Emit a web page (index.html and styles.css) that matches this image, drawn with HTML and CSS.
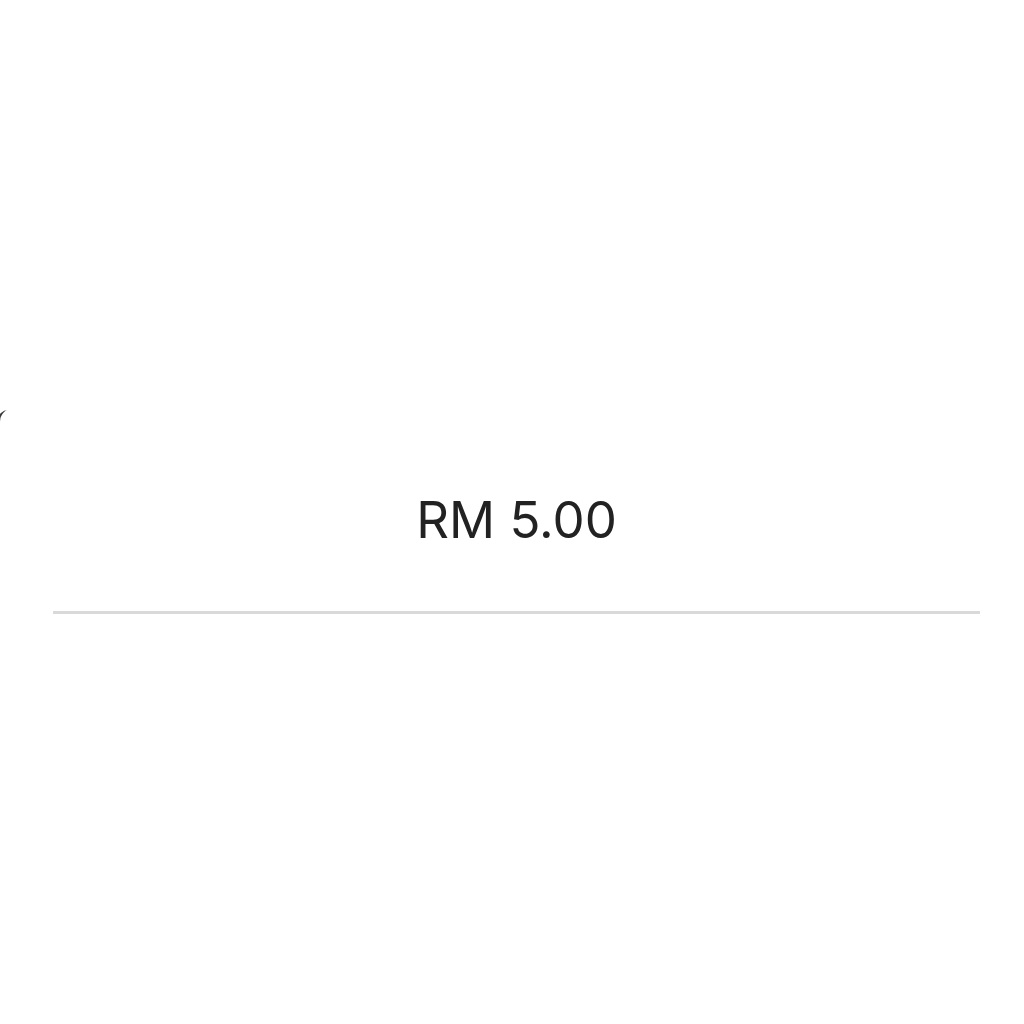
FILE: index.html
```html
<!DOCTYPE html>
<html lang="en">

<head>
    <meta charset="UTF-8">
    <meta name="viewport" content="width=device-width, initial-scale=1.0">
    <title>Amount</title>
    <link rel="stylesheet" href="styles.css">
</head>

<body>
    <div class="top"></div>

    <!-- 금액 시트 -->
    <div class="sheet">
        <div class="amount">RM 5.00</div>
        <div class="divider"></div>
    </div>
</body>

</html>
```

FILE: styles.css
```css
body {
    margin: 0;
    padding: 0;
    background-color: #ffffff;
    font-family: Inter, "Open Sans", "Liberation Sans", sans-serif;
}

.top {
    height: 408px;
    background: #ffffff;
}

.sheet {
    position: relative;
    height: 616px;
    background: #ffffff;
    border-radius: 14px 14px 0 0;
    box-shadow: -6px -2px 0 -4px #3a3a3a;
    padding: 0 44px 0 53px;
}

.amount {
    padding-top: 82px;
    text-align: center;
    font-size: 51px;
    line-height: 60px;
    color: #222222;
    letter-spacing: 0;
}

.divider {
    margin-top: 61px;
    height: 3px;
    background: #d9d9d9;
}
```
